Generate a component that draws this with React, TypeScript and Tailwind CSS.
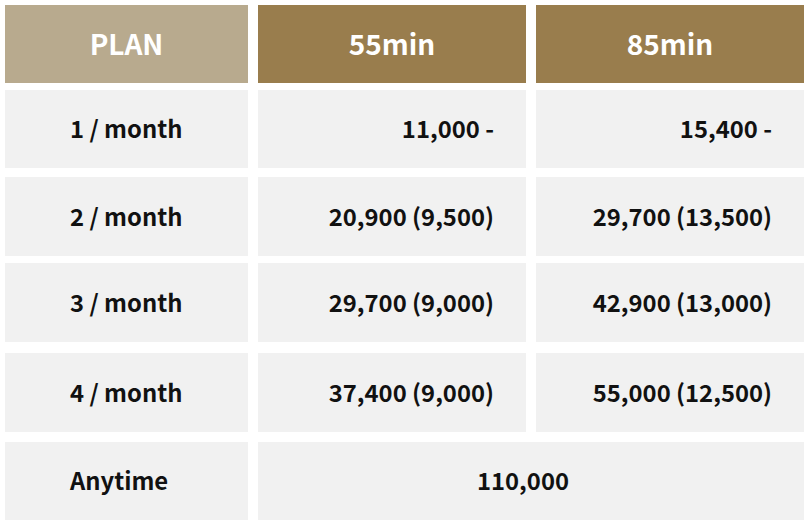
const rows = [
  { plan: '1 / month', a: '11,000 -', b: '15,400 -', box: 'mt-[7px] h-[78px]' },
  { plan: '2 / month', a: '20,900 (9,500)', b: '29,700 (13,500)', box: 'mt-[9px] h-[79px]' },
  { plan: '3 / month', a: '29,700 (9,000)', b: '42,900 (13,000)', box: 'mt-[7px] h-[79px]' },
  { plan: '4 / month', a: '37,400 (9,000)', b: '55,000 (12,500)', box: 'mt-[11px] h-[79px]' },
]

export default function App() {
  return (
    <div
      className="w-[811px] h-[524px] bg-white pt-[5px] pl-[5px] text-[23.8px] font-bold text-[#111]"
      style={{ fontFamily: '"Noto Sans CJK JP", "Noto Sans", sans-serif' }}
    >
      <div className="grid grid-cols-[243px_268px_268px] gap-x-[10px] h-[78px] text-white text-[28px]">
        <div className="bg-[#b8aa8e] flex items-center justify-center pb-[2px]">PLAN</div>
        <div className="bg-[#997d4d] flex items-center justify-center pb-[2px]">55min</div>
        <div className="bg-[#997d4d] flex items-center justify-center pb-[2px]">85min</div>
      </div>

      {rows.map((r) => (
        <div key={r.plan} className={`grid grid-cols-[243px_268px_268px] gap-x-[10px] ${r.box}`}>
          <div className="bg-[#f1f1f1] flex items-center pl-[65px] pb-[2px]">{r.plan}</div>
          <div className="bg-[#f1f1f1] flex items-center justify-end pr-[32px] pb-[2px]">{r.a}</div>
          <div className="bg-[#f1f1f1] flex items-center justify-end pr-[32px] pb-[2px]">{r.b}</div>
        </div>
      ))}

      <div className="grid grid-cols-[243px_546px] gap-x-[10px] mt-[10px] h-[78px]">
        <div className="bg-[#f1f1f1] flex items-center pl-[65px] pb-[2px]">Anytime</div>
        <div className="bg-[#f1f1f1] flex items-center justify-center pr-[16px] pb-[2px]">110,000</div>
      </div>
    </div>
  )
}
